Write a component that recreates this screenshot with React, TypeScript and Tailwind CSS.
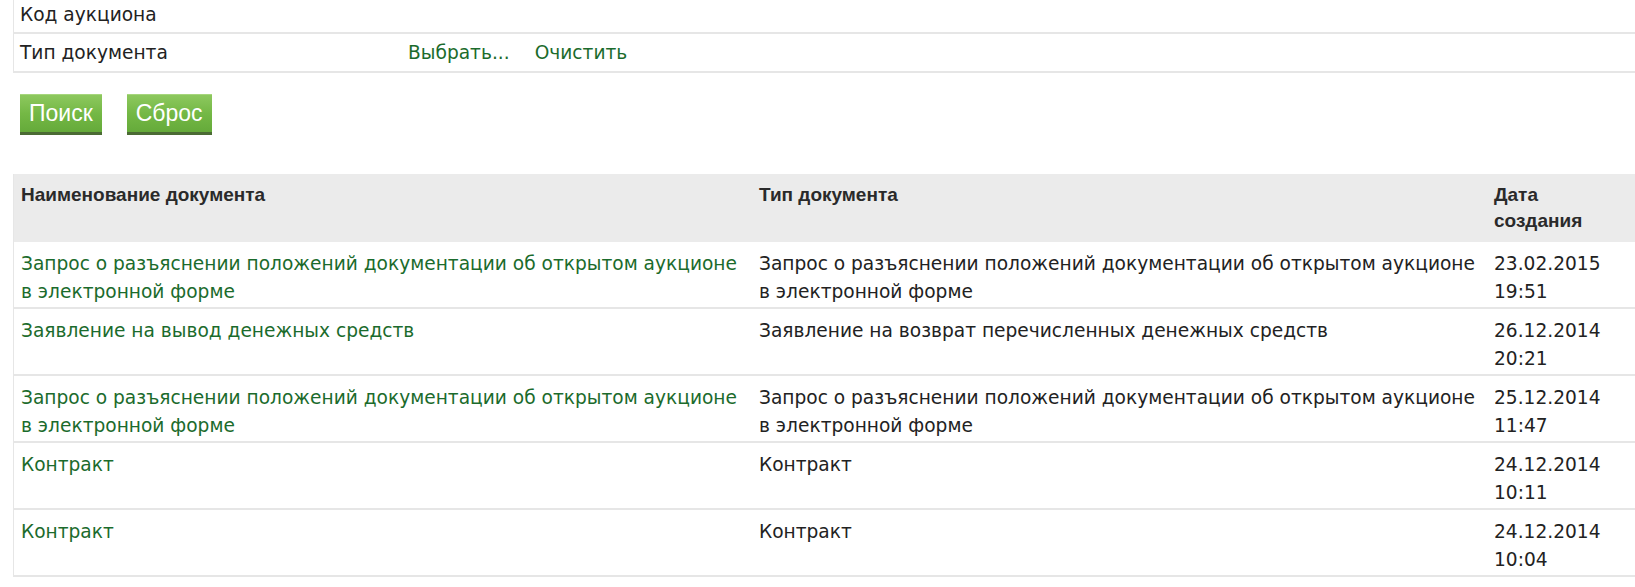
import React from "react";

type Doc = {
  name: string;
  type: string;
  date: string;
  time: string;
};

const docs: Doc[] = [
  {
    name: "Запрос о разъяснении положений документации об открытом аукционе в электронной форме",
    type: "Запрос о разъяснении положений документации об открытом аукционе в электронной форме",
    date: "23.02.2015",
    time: "19:51",
  },
  {
    name: "Заявление на вывод денежных средств",
    type: "Заявление на возврат перечисленных денежных средств",
    date: "26.12.2014",
    time: "20:21",
  },
  {
    name: "Запрос о разъяснении положений документации об открытом аукционе в электронной форме",
    type: "Запрос о разъяснении положений документации об открытом аукционе в электронной форме",
    date: "25.12.2014",
    time: "11:47",
  },
  { name: "Контракт", type: "Контракт", date: "24.12.2014", time: "10:11" },
  { name: "Контракт", type: "Контракт", date: "24.12.2014", time: "10:04" },
];

const body = "font-['DejaVu_Sans',Verdana,sans-serif] text-[18.6px] leading-[28px]";

function GreenButton({ children }: { children: React.ReactNode }) {
  return (
    <button
      type="button"
      className="h-[41px] px-[9px] border-t border-t-[#a6d67c] border-b-[3px] border-b-[#4b6b34] bg-gradient-to-b from-[#8dc85e] via-[#74b845] to-[#65aa3a] text-white font-['Liberation_Sans',Arial,sans-serif] text-[23px] leading-none"
    >
      {children}
    </button>
  );
}

export default function App() {
  return (
    <div className={`min-h-[587px] bg-white text-[#222] overflow-hidden ${body}`}>
      {/* filter form */}
      <div className="ml-[13px] border-l border-[#e6e6e6] -mt-[6px]">
        <div className="h-[40px] flex items-end pb-[3px] pl-[6px] border-b-2 border-[#e6e6e6]">
          Код аукциона
        </div>
        <div className="h-[39px] flex items-center pl-[6px] border-b-2 border-[#e6e6e6]">
          <span className="w-[388px]">Тип документа</span>
          <a className="text-[#1b6b2c] mr-[25px]">Выбрать...</a>
          <a className="text-[#1b6b2c]">Очистить</a>
        </div>
      </div>

      <div className="flex gap-[25px] pl-[20px] mt-[21px]">
        <GreenButton>Поиск</GreenButton>
        <GreenButton>Сброс</GreenButton>
      </div>

      {/* results */}
      <div className="ml-[13px] mt-[39px] border-l border-[#e6e6e6]">
        <div className="grid grid-cols-[738px_735px_1fr] bg-[#ebebeb] h-[68px] font-['Liberation_Sans',Arial,sans-serif] font-bold text-[19px] leading-[26px] text-[#2a2a2a]">
          <div className="px-[7px] pt-[8px]">Наименование документа</div>
          <div className="px-[7px] pt-[8px]">Тип документа</div>
          <div className="px-[7px] pt-[8px] w-[110px]">Дата создания</div>
        </div>
        {docs.map((d, i) => (
          <div
            key={i}
            className="grid grid-cols-[738px_735px_1fr] border-b-2 border-[#e6e6e6] min-h-[67px]"
          >
            <div className="px-[7px] pt-[8px] pb-[1px]">
              <a className="text-[#1b6b2c]">{d.name}</a>
            </div>
            <div className="pl-[7px] pr-[3px] pt-[8px] pb-[1px]">{d.type}</div>
            <div className="px-[7px] pt-[8px] pb-[1px]">
              <div>{d.date}</div>
              <div>{d.time}</div>
            </div>
          </div>
        ))}
      </div>
    </div>
  );
}
